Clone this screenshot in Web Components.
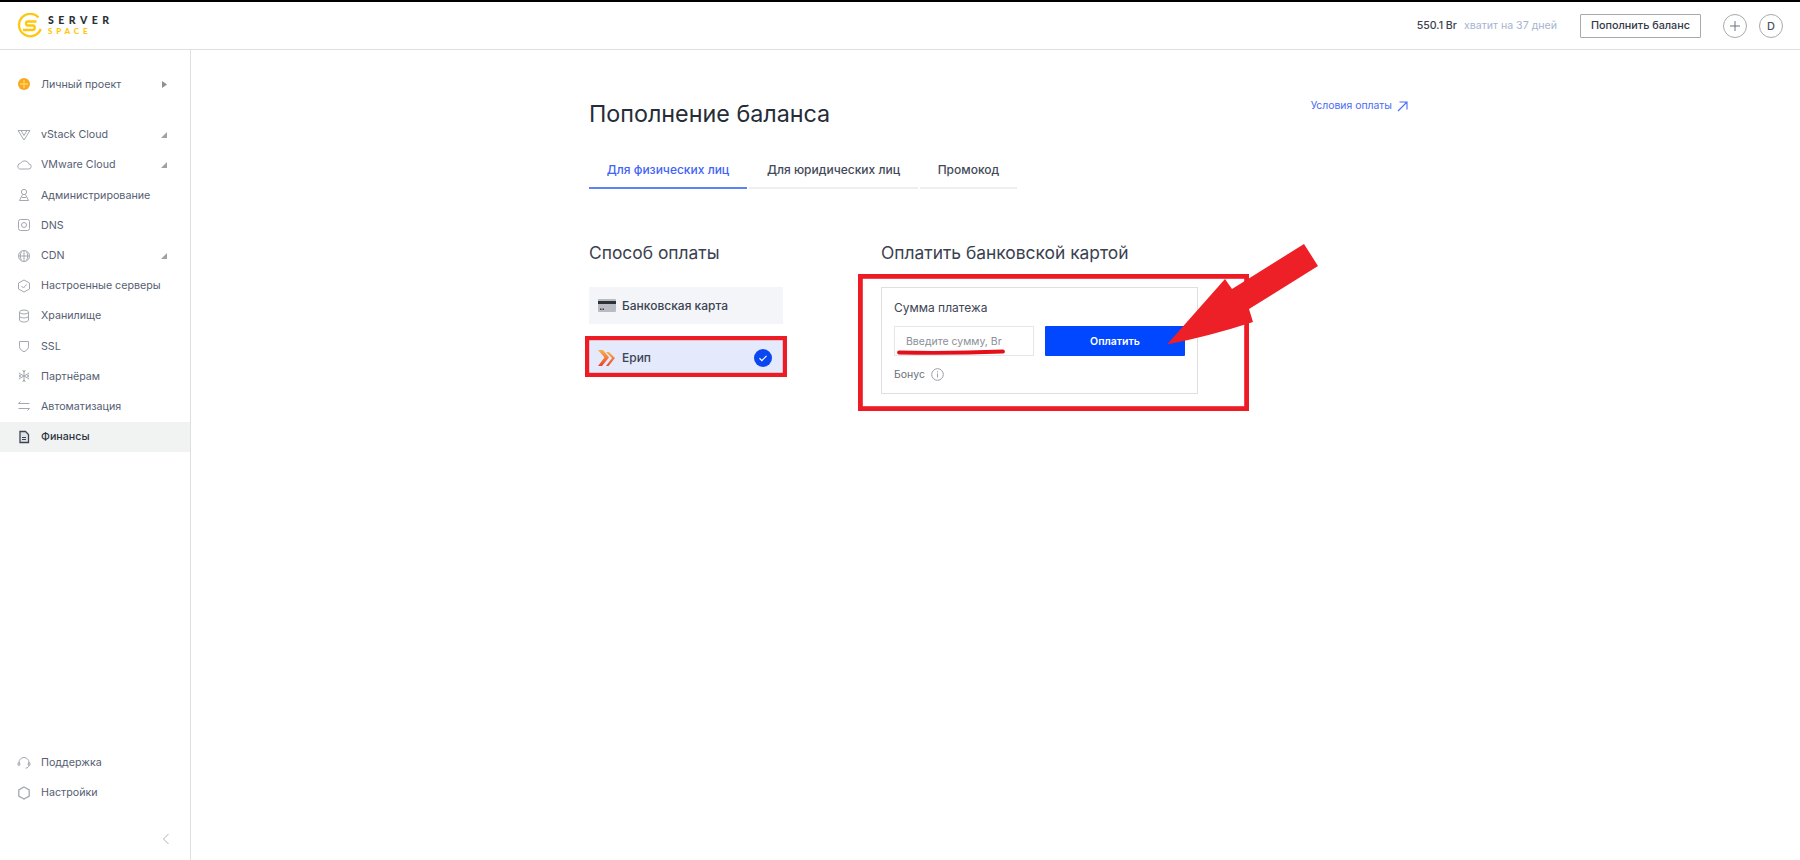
<!DOCTYPE html>
<html lang="ru">
<head>
<meta charset="utf-8">
<title>Пополнение баланса</title>
<style>
  html, body { margin: 0; height: 100%; }
  body { font-family: Inter, "Noto Sans", sans-serif; color: #2a3140; background: #fff; }
</style>
</head>
<body>
<app-shell>
  <top-bar slot="top"></top-bar>
  <side-nav slot="side">
    <nav-item icon="coin" arrow="right" class="project">Личный проект</nav-item>
    <nav-item icon="vstack" arrow="corner" class="first">vStack Cloud</nav-item>
    <nav-item icon="cloud" arrow="corner">VMware Cloud</nav-item>
    <nav-item icon="user">Администрирование</nav-item>
    <nav-item icon="dns">DNS</nav-item>
    <nav-item icon="globe" arrow="corner">CDN</nav-item>
    <nav-item icon="hex">Настроенные серверы</nav-item>
    <nav-item icon="db">Хранилище</nav-item>
    <nav-item icon="shield">SSL</nav-item>
    <nav-item icon="flake">Партнёрам</nav-item>
    <nav-item icon="swap">Автоматизация</nav-item>
    <nav-item icon="doc" active>Финансы</nav-item>
    <nav-item icon="headset" slot="bottom">Поддержка</nav-item>
    <nav-item icon="gear" slot="bottom">Настройки</nav-item>
  </side-nav>
  <balance-page slot="main"></balance-page>
</app-shell>
<red-marks></red-marks>

<script>
const ICONS = {
  coin: '<circle cx="9" cy="9" r="6" fill="#f9a825" stroke="none"/><path d="M9 5v8M5 9h8" stroke="#ffd54f" stroke-width="1.4"/>',
  vstack: '<path d="M3 4.500h12L9 14z"/><path d="M6 4.500l3 5 3-5"/>',
  cloud: '<path d="M4.500 13h9a2.500 2.500 0 0 0 .4-5A4.500 4.500 0 0 0 5.600 7.300 3 3 0 0 0 4.500 13z"/>',
  user: '<circle cx="9" cy="6" r="2.600"/><path d="M7.500 8.500L4.500 14.500h9l-3-6M7 11.500h4"/>',
  dns: '<rect x="3.500" y="3.500" width="11" height="11" rx="2"/><circle cx="9" cy="9" r="2.500"/>',
  globe: '<circle cx="9" cy="9" r="5.500"/><path d="M3.500 9h11M9 3.500v11M6.500 4.500c-1.500 3-1.500 6 0 9M11.500 4.500c1.500 3 1.500 6 0 9"/>',
  hex: '<path d="M9 3l5.500 3v6L9 15l-5.500-3V6z"/><path d="M6.500 9l2 2 3-3.500"/>',
  db: '<ellipse cx="9" cy="5" rx="4.500" ry="2"/><path d="M4.500 5v8c0 1.100 2 2 4.500 2s4.500-.9 4.500-2V5M4.500 9c0 1.100 2 2 4.500 2s4.500-.9 4.500-2"/>',
  shield: '<path d="M4.500 4.500h9v5c0 2.500-2 4.200-4.500 5.200-2.500-1-4.500-2.700-4.500-5.200z"/>',
  flake: '<path d="M9 3v12M3.800 6l10.400 6M14.200 6L3.800 12M7.500 3.500L9 5l1.500-1.500M7.500 14.500L9 13l1.500 1.500M4 8l2 1-2 1M14 8l-2 1 2 1"/>',
  swap: '<path d="M3.500 6.500h11M3.500 6.500L5.500 4.500M14.500 11.500h-11M14.500 11.500l-2 2"/>',
  doc: '<path d="M5 3.500h5.500L13.500 6.500V14.500H5z" fill="#dfe2e6" stroke="#3c4452" stroke-width="1.300"/><path d="M7 9.500h4M7 11.500h4" stroke="#3c4452"/>',
  headset: '<path d="M4 11V8.500a5 5 0 0 1 10 0V11M14 11c0 2-1.500 3-3.500 3.200"/><rect x="3" y="8.500" width="1.800" height="3" rx=".8"/><rect x="13.200" y="8.500" width="1.800" height="3" rx=".8"/>',
  gear: '<path d="M9 3l5.200 3v6L9 15l-5.200-3V6z" stroke-width="1.300"/>'
};

const shellTpl = document.createElement('template');
shellTpl.innerHTML = `
  <style>
    :host {
      display: grid;
      grid-template-rows: 50px 1fr;
      grid-template-columns: 191px 1fr;
      height: 860px;
      overflow: hidden;
    }
    .top { grid-column: 1 / 3; }
  </style>
  <div class="top"><slot name="top"></slot></div>
  <slot name="side"></slot>
  <slot name="main"></slot>
`;
class AppShell extends HTMLElement {
  constructor() {
    super();
    this.attachShadow({ mode: 'open' }).appendChild(shellTpl.content.cloneNode(true));
  }
}
customElements.define('app-shell', AppShell);

class TopBar extends HTMLElement {
  constructor() {
    super();
    this.attachShadow({ mode: 'open' });
    this.shadowRoot.innerHTML = `
      <style>
        :host {
          display: flex;
          align-items: center;
          justify-content: space-between;
          box-sizing: border-box;
          height: 50px;
          border-top: 2px solid #000;
          border-bottom: 1px solid #dfdfdf;
          padding: 0 17px;
          font-size: 11px;
        }
        .logo { display: flex; align-items: center; gap: 5px; }
        .logo-text { display: flex; flex-direction: column; font-family: Lato, Inter, sans-serif; font-weight: 900; line-height: 10px; }
        .server { font-size: 10.500px; letter-spacing: 4.500px; color: #2b3038; }
        .space { font-size: 8px; letter-spacing: 3.800px; color: #ffc60b; margin-top: 1px; }
        .right { display: flex; align-items: center; }
        .sum { font-size: 10.600px; font-weight: 500; color: #3a4150; }
        .days { font-size: 10.600px; color: #a6b4d0; margin-left: 7px; margin-right: 23px; }
        .pay {
          box-sizing: border-box;
          width: 121px;
          height: 24px;
          display: flex;
          align-items: center;
          justify-content: center;
          border: 1px solid #a9a9a9;
          border-radius: 1px;
          color: #333a48;
          font-size: 10.800px;
          font-weight: 500;
        }
        .round {
          box-sizing: border-box;
          width: 24px;
          height: 24px;
          display: flex;
          align-items: center;
          justify-content: center;
          border: 1px solid #a9a9a9;
          border-radius: 50%;
          color: #4b5361;
          font-size: 11px;
          font-weight: 500;
        }
        .plus { margin-left: 22px; margin-right: 12px; }
      </style>
      <div class="logo">
        <svg width="26" height="25" viewBox="0 0 25 25" fill="none" stroke="#ffc60b" stroke-width="2.300">
          <path d="M21 4.500A11.200 11.200 0 1 0 23.200 16"/>
          <path d="M19 8.500H10.500a2 2 0 0 0 0 4h4.500a2.200 2.200 0 0 1 0 4.500H5.500"/>
        </svg>
        <div class="logo-text"><span class="server">SERVER</span><span class="space">SPACE</span></div>
      </div>
      <div class="right">
        <span class="sum">550.1 Br</span>
        <span class="days">хватит на 37 дней</span>
        <div class="pay">Пополнить баланс</div>
        <div class="round plus">
          <svg width="12" height="12" viewBox="0 0 12 12" stroke="#6b7280" stroke-width="1"><path d="M6 1v10M1 6h10"/></svg>
        </div>
        <div class="round">D</div>
      </div>
    `;
  }
}
customElements.define('top-bar', TopBar);

class SideNav extends HTMLElement {
  constructor() {
    super();
    this.attachShadow({ mode: 'open' });
    this.shadowRoot.innerHTML = `
      <style>
        :host {
          display: flex;
          flex-direction: column;
          box-sizing: border-box;
          height: 810px;
          border-right: 1px solid #dfdfdf;
          padding: 19px 0 6px;
        }
        .items { display: flex; flex-direction: column; }
        ::slotted(.project) { margin-bottom: 20.500px; }
        .bottom { margin-top: auto; display: flex; flex-direction: column; }
        .collapse { display: flex; justify-content: flex-end; align-items: center; height: 30px; padding-right: 20px; margin-top: 16px; }
      </style>
      <div class="items"><slot></slot></div>
      <div class="bottom">
        <slot name="bottom"></slot>
        <div class="collapse">
          <svg width="8" height="12" viewBox="0 0 8 12" fill="none" stroke="#aeb2b8" stroke-width="1"><path d="M6.500 1L1.500 6l5 5"/></svg>
        </div>
      </div>
    `;
  }
}
customElements.define('side-nav', SideNav);

class NavItem extends HTMLElement {
  constructor() {
    super();
    this.attachShadow({ mode: 'open' });
    const icon = ICONS[this.getAttribute('icon')] || '';
    const arrow = this.getAttribute('arrow');
    let arrowHtml = '';
    if (arrow === 'right') arrowHtml = '<svg class="arrow" width="5" height="7" viewBox="0 0 5 7"><path d="M0 0l5 3.500-5 3.500z" fill="#8b9097"/></svg>';
    if (arrow === 'corner') arrowHtml = '<svg class="arrow" width="6" height="6" viewBox="0 0 6 6"><path d="M6 0v6H0z" fill="#9ea2a8"/></svg>';
    this.shadowRoot.innerHTML = `
      <style>
        :host {
          display: flex;
          align-items: center;
          box-sizing: border-box;
          height: 30.200px;
          padding-left: 15px;
          font-size: 10.700px;
          color: #566072;
        }
        :host([active]) { background: #f1f3f3; color: #2d3440; font-weight: 500; }
        svg.icon { flex: none; margin-right: 8px; }
        .arrow { margin-left: auto; margin-right: 23px; }
      </style>
      <svg class="icon" width="18" height="18" viewBox="0 0 18 18" fill="none" stroke="#a4a8ae" stroke-width="1">${icon}</svg>
      <slot></slot>
      ${arrowHtml}
    `;
  }
}
customElements.define('nav-item', NavItem);

class PageTabs extends HTMLElement {
  constructor() {
    super();
    this.attachShadow({ mode: 'open' });
    this.shadowRoot.innerHTML = `
      <style>
        :host { display: flex; gap: 2px; font-size: 12px; font-weight: 500; color: #434a57; }
        .tab {
          box-sizing: border-box;
          height: 38px;
          display: flex;
          align-items: center;
          justify-content: center;
          border-bottom: 2px solid #eeeeee;
        }
        .on { color: #3f63f5; border-bottom-color: #5c82fb; }
      </style>
      <div class="tab on" style="width:158px">Для физических лиц</div>
      <div class="tab" style="width:169px">Для юридических лиц</div>
      <div class="tab" style="width:97px">Промокод</div>
    `;
  }
}
customElements.define('page-tabs', PageTabs);

class PayMethod extends HTMLElement {
  constructor() {
    super();
    this.attachShadow({ mode: 'open' });
    this.shadowRoot.innerHTML = `
      <style>
        :host {
          display: flex;
          align-items: center;
          box-sizing: border-box;
          height: 37px;
          padding: 0 11px 0 9px;
          background: #f4f5f8;
          font-size: 12px;
          font-weight: 500;
          color: #3c4454;
        }
        :host([selected]) { background: #e4e9fb; }
        .pic { display: flex; margin-right: 6px; }
        .check { margin-left: auto; display: none; }
        :host([selected]) .check { display: block; }
      </style>
      <span class="pic"><slot name="icon"></slot></span>
      <slot></slot>
      <svg class="check" width="18" height="18" viewBox="0 0 18 18">
        <circle cx="9" cy="9" r="9" fill="#0a47f0"/>
        <path d="M5.500 9.300l2.400 2.300 4.600-4.800" fill="none" stroke="#fff" stroke-width="1.200"/>
      </svg>
    `;
  }
}
customElements.define('pay-method', PayMethod);

class PayForm extends HTMLElement {
  constructor() {
    super();
    this.attachShadow({ mode: 'open' });
    this.shadowRoot.innerHTML = `
      <style>
        :host {
          display: block;
          box-sizing: border-box;
          width: 317px;
          height: 107px;
          border: 1px solid #dfdfdf;
          padding: 12px 12px 0;
        }
        .label { font-size: 12px; line-height: 15px; color: #3f4654; }
        .row { display: flex; gap: 11px; margin-top: 11px; }
        .input {
          box-sizing: border-box;
          width: 140px;
          height: 30px;
          display: flex;
          align-items: center;
          padding-left: 11px;
          border: 1px solid #e6e6e6;
          font-size: 10.500px;
          color: #8a8f98;
        }
        .btn {
          width: 140px;
          height: 30px;
          display: flex;
          align-items: center;
          justify-content: center;
          background: #0047ff;
          border-radius: 1px;
          color: #fff;
          font-size: 10.500px;
          font-weight: 600;
        }
        .bonus { display: flex; align-items: center; gap: 6px; margin-top: 12px; font-size: 10.500px; color: #6a707a; }
      </style>
      <div class="label">Сумма платежа</div>
      <div class="row">
        <div class="input" role="textbox">Введите сумму, Br</div>
        <div class="btn" role="button">Оплатить</div>
      </div>
      <div class="bonus">
        <span>Бонус</span>
        <svg width="13" height="13" viewBox="0 0 13 13" fill="none" stroke="#9a9da3" stroke-width="1">
          <circle cx="6.500" cy="6.500" r="5.800"/><path d="M6.500 5.500v4M6.500 3.200v1.200"/>
        </svg>
      </div>
    `;
  }
}
customElements.define('pay-form', PayForm);

class BalancePage extends HTMLElement {
  constructor() {
    super();
    this.attachShadow({ mode: 'open' });
    this.shadowRoot.innerHTML = `
      <style>
        :host { display: block; padding: 46px 0 0 398px; }
        .wrap { width: 819px; }
        .head { display: flex; justify-content: space-between; align-items: flex-start; }
        h1 { margin: 0; font-size: 23.300px; line-height: 36px; font-weight: 400; color: #262c38; }
        .terms { display: flex; align-items: center; gap: 5px; margin-top: 3px; font-size: 10.400px; line-height: 14px; color: #4a6cf5; }
        page-tabs { margin-top: 19px; }
        .cols { display: flex; gap: 98px; margin-top: 52px; }
        .left { width: 194px; flex: none; }
        h2 { margin: 0; font-size: 17.400px; line-height: 24px; font-weight: 400; color: #3a4150; }
        .methods { display: flex; flex-direction: column; gap: 15px; margin-top: 22px; }
        pay-form { margin-top: 22px; }
      </style>
      <div class="wrap">
        <div class="head">
          <h1>Пополнение баланса</h1>
          <div class="terms">
            <span>Условия оплаты</span>
            <svg width="11" height="11" viewBox="0 0 11 11" fill="none" stroke="#4a6cf5" stroke-width="1.100"><path d="M1 10L10 1M2.500 1H10v7.500"/></svg>
          </div>
        </div>
        <page-tabs></page-tabs>
        <div class="cols">
          <div class="left">
            <h2>Способ оплаты</h2>
            <div class="methods">
              <pay-method>
                <svg slot="icon" width="18" height="13" viewBox="0 0 18 13">
                  <rect width="18" height="13" rx="1" fill="#b9bcc2"/>
                  <rect y="2" width="18" height="3" fill="#2d3138"/>
                  <rect x="2" y="9.500" width="1.500" height="1.500" fill="#3a3e45"/>
                  <rect x="4.500" y="9.500" width="1.500" height="1.500" fill="#3a3e45"/>
                </svg>
                Банковская карта
              </pay-method>
              <pay-method selected>
                <svg slot="icon" width="18" height="18" viewBox="0 0 18 18">
                  <defs><linearGradient id="er" x1="0" y1="0" x2="0" y2="1"><stop offset="0" stop-color="#fbb04a"/><stop offset="1" stop-color="#e8452c"/></linearGradient></defs>
                  <path d="M0 1h5l6 7.500L4 17H0l6.500-8.500z" fill="url(#er)"/>
                  <path d="M8 3h3l6 6-6.500 8H8l6-8z" fill="url(#er)"/>
                </svg>
                Ерип
              </pay-method>
            </div>
          </div>
          <div class="right">
            <h2>Оплатить банковской картой</h2>
            <pay-form></pay-form>
          </div>
        </div>
      </div>
    `;
  }
}
customElements.define('balance-page', BalancePage);

// hand drawn red annotations lying over the screenshot
class RedMarks extends HTMLElement {
  constructor() {
    super();
    this.attachShadow({ mode: 'open' });
    this.shadowRoot.innerHTML = `
      <style>
        :host { position: absolute; left: 0; top: 0; width: 1800px; height: 860px; pointer-events: none; }
        svg { display: block; }
      </style>
      <svg width="1800" height="860" viewBox="0 0 1800 860" fill="none">
        <rect x="587.100" y="338.100" width="197.800" height="36.800" stroke="#ed1c24" stroke-width="4.200"/>
        <rect x="860.400" y="276.400" width="386.200" height="132.200" stroke="#ed1c24" stroke-width="4.800"/>
        <path d="M899 352.500Q950 353.500 1003 351.500" stroke="#e3101c" stroke-width="3.800" stroke-linecap="round"/>
        <path d="M1167 344.500L1225 279L1232 289L1304 244L1318 266L1249 309L1253 322Q1210 336 1167 344.500Z" fill="#ed1f27"/>
      </svg>
    `;
  }
}
customElements.define('red-marks', RedMarks);
</script>
</body>
</html>
